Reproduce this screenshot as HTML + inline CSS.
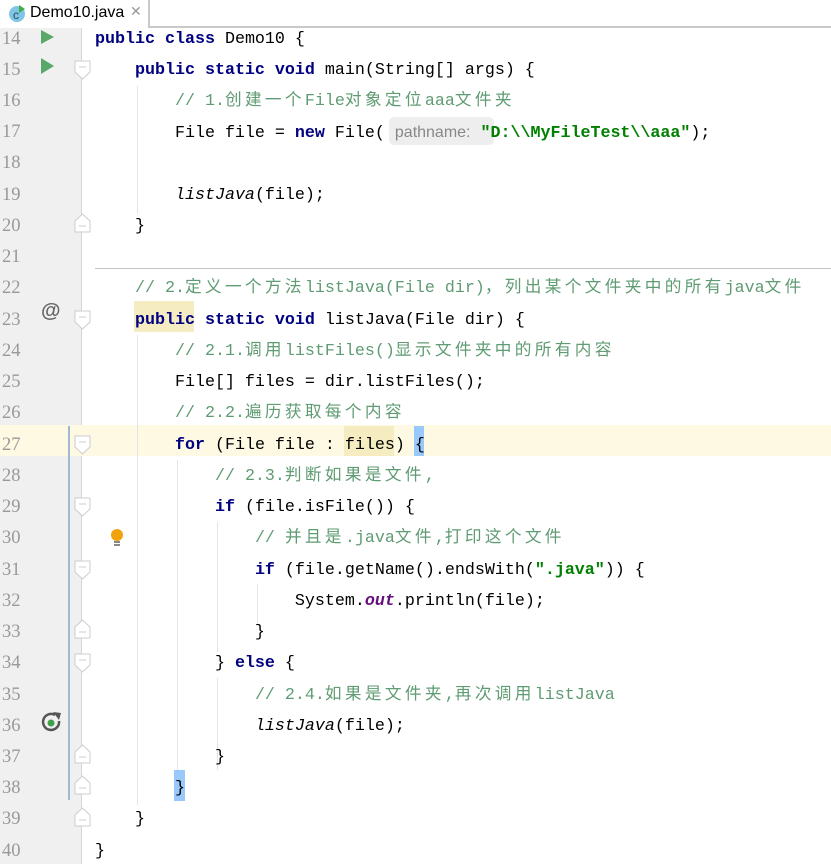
<!DOCTYPE html>
<html><head><meta charset="utf-8"><style>
*{margin:0;padding:0;box-sizing:border-box}
body{width:831px;height:864px;overflow:hidden;background:#fff;position:relative;font-family:"Liberation Mono",monospace;font-size:16.67px}
.tabbar{position:absolute;left:0;top:0;width:831px;height:28px;background:#fff;border-bottom:2px solid #c9c9c9}
.tab{position:absolute;left:0;top:0;width:150px;height:28px;border-right:2px solid #c9c9c9;background:#fff;font-family:"Liberation Sans",sans-serif;font-size:16px;color:#000}
.gutter{position:absolute;left:0;top:28px;width:82px;height:836px;background:#f0f0f0;border-right:1px solid #d6d6d6}
.ln{position:absolute;left:0;width:30px;text-align:left;padding-left:2px;color:#999;font-size:18.5px;font-family:"Liberation Serif",serif;height:31px;line-height:31px}
.line{position:absolute;left:95px;height:31px;line-height:31px;white-space:pre;color:#000}
.k{color:#000080;font-weight:bold}
.cm{color:#5f9b73}
.s{color:#008000;font-weight:bold}
.it{font-style:italic}
.o{color:#660e7a;font-weight:bold;font-style:italic}
.c{font-family:"Noto Sans CJK SC",sans-serif;letter-spacing:3.33px;font-size:16.67px;line-height:0}
.guide{position:absolute;width:1px;background:#e4e4e4}
</style></head><body>
<div class="tabbar"><div class="tab">
<svg style="position:absolute;left:8px;top:5px" width="18" height="18"><circle cx="9" cy="9" r="8" fill="#7fc5e6"/><text x="5" y="14" font-size="12" font-family="Liberation Sans" fill="#2a4a5a">c</text><polygon points="11,0 17,4 11,8" fill="#3fae4a"/></svg>
<span style="position:absolute;left:30px;top:4px">Demo10.java</span>
<span style="position:absolute;left:130px;top:3px;color:#999;font-size:14px">✕</span></div></div>
<div class="gutter"></div>
<div style="position:absolute;left:0;top:425px;width:831px;height:31px;background:#fdf9e3"></div>
<div style="position:absolute;left:0;top:425px;width:82px;height:31px;background:#fdf9e3"></div>
<div style="position:absolute;left:68px;top:426px;width:2px;height:374px;background:#a5b8d2"></div>
<div style="position:absolute;left:95px;top:268px;width:736px;height:1px;background:#c4c4c4"></div>
<div class="guide" style="left:137px;top:86px;height:128px"></div>
<div class="guide" style="left:137px;top:335px;height:470px"></div>
<div class="guide" style="left:177px;top:460px;height:318px"></div>
<div class="guide" style="left:217px;top:522px;height:130px"></div>
<div class="guide" style="left:217px;top:678px;height:92px"></div>
<div class="guide" style="left:257px;top:584px;height:40px"></div>
<div style="position:absolute;left:134px;top:301px;width:60px;height:31px;background:#f5ecc2"></div>
<div style="position:absolute;left:344px;top:426px;width:50px;height:30px;background:#f5ecc2"></div>
<div style="position:absolute;left:414px;top:426px;width:10px;height:30px;background:#99c8fa"></div>
<div style="position:absolute;left:174px;top:770px;width:11px;height:31px;background:#99c8fa"></div>
<div style="position:absolute;left:389px;top:117px;width:105px;height:28px;background:#eeeeee;border-radius:5px"></div>
<div class="ln" style="top:24px">14</div><div class="ln" style="top:55px">15</div><div class="ln" style="top:86px">16</div><div class="ln" style="top:117px">17</div><div class="ln" style="top:148px">18</div><div class="ln" style="top:180px">19</div><div class="ln" style="top:211px">20</div><div class="ln" style="top:242px">21</div><div class="ln" style="top:273px">22</div><div class="ln" style="top:305px">23</div><div class="ln" style="top:336px">24</div><div class="ln" style="top:367px">25</div><div class="ln" style="top:398px">26</div><div class="ln" style="top:430px">27</div><div class="ln" style="top:461px">28</div><div class="ln" style="top:492px">29</div><div class="ln" style="top:523px">30</div><div class="ln" style="top:555px">31</div><div class="ln" style="top:586px">32</div><div class="ln" style="top:617px">33</div><div class="ln" style="top:648px">34</div><div class="ln" style="top:680px">35</div><div class="ln" style="top:711px">36</div><div class="ln" style="top:742px">37</div><div class="ln" style="top:773px">38</div><div class="ln" style="top:804px">39</div><div class="ln" style="top:836px">40</div>
<svg style="position:absolute;left:41px;top:30px" width="14" height="16"><polygon points="0,0 13,7 0,14" fill="#59a869"/></svg>
<svg style="position:absolute;left:41px;top:58px" width="14" height="18"><polygon points="0,0 13,8 0,16" fill="#59a869"/></svg>
<div style="position:absolute;left:41px;top:300px;font-family:'Liberation Sans',sans-serif;font-size:20px;font-weight:bold;color:#666">@</div>
<svg style="position:absolute;left:108px;top:528px" width="18" height="20"><circle cx="9" cy="7" r="6" fill="#f0a30a"/><rect x="6" y="13" width="6" height="2" fill="#888"/><rect x="6" y="16" width="6" height="2" fill="#888"/></svg>
<svg style="position:absolute;left:41px;top:712px" width="22" height="22"><path d="M14 3 A8 8 0 1 0 18 9" fill="none" stroke="#555" stroke-width="2.5"/><polygon points="12,0 20,1 18,8" fill="#555"/><circle cx="10" cy="11" r="3.5" fill="#3fa04a"/></svg>
<svg style="position:absolute;left:74px;top:60px" width="18" height="22"><path d="M1 1H16V12L8.5 19L1 12Z" fill="#fff" stroke="#ccc"/><path d="M5 7H12" stroke="#ccc"/></svg>
<svg style="position:absolute;left:74px;top:212px" width="18" height="22"><path d="M1 20H16V9L8.5 2L1 9Z" fill="#fff" stroke="#ccc"/><path d="M5 14H12" stroke="#ccc"/></svg>
<svg style="position:absolute;left:74px;top:310px" width="18" height="22"><path d="M1 1H16V12L8.5 19L1 12Z" fill="#fff" stroke="#ccc"/><path d="M5 7H12" stroke="#ccc"/></svg>
<svg style="position:absolute;left:74px;top:435px" width="18" height="22"><path d="M1 1H16V12L8.5 19L1 12Z" fill="#fff" stroke="#ccc"/><path d="M5 7H12" stroke="#ccc"/></svg>
<svg style="position:absolute;left:74px;top:497px" width="18" height="22"><path d="M1 1H16V12L8.5 19L1 12Z" fill="#fff" stroke="#ccc"/><path d="M5 7H12" stroke="#ccc"/></svg>
<svg style="position:absolute;left:74px;top:560px" width="18" height="22"><path d="M1 1H16V12L8.5 19L1 12Z" fill="#fff" stroke="#ccc"/><path d="M5 7H12" stroke="#ccc"/></svg>
<svg style="position:absolute;left:74px;top:618px" width="18" height="22"><path d="M1 20H16V9L8.5 2L1 9Z" fill="#fff" stroke="#ccc"/><path d="M5 14H12" stroke="#ccc"/></svg>
<svg style="position:absolute;left:74px;top:653px" width="18" height="22"><path d="M1 1H16V12L8.5 19L1 12Z" fill="#fff" stroke="#ccc"/><path d="M5 7H12" stroke="#ccc"/></svg>
<svg style="position:absolute;left:74px;top:743px" width="18" height="22"><path d="M1 20H16V9L8.5 2L1 9Z" fill="#fff" stroke="#ccc"/><path d="M5 14H12" stroke="#ccc"/></svg>
<svg style="position:absolute;left:74px;top:774px" width="18" height="22"><path d="M1 20H16V9L8.5 2L1 9Z" fill="#fff" stroke="#ccc"/><path d="M5 14H12" stroke="#ccc"/></svg>
<svg style="position:absolute;left:74px;top:806px" width="18" height="22"><path d="M1 20H16V9L8.5 2L1 9Z" fill="#fff" stroke="#ccc"/><path d="M5 14H12" stroke="#ccc"/></svg>
<div class="line" style="top:24px"><span class="k">public class</span> Demo10 {</div>
<div class="line" style="top:55px">    <span class="k">public static void</span> main(String[] args) {</div>
<div class="line" style="top:86px">        <span class="cm">// 1.<span class="c">创建一个</span>File<span class="c">对象定位</span>aaa<span class="c">文件夹</span></span></div>
<div class="line" style="top:117px">        File file = <span class="k">new</span> File( <span style="font-family:'Liberation Sans',sans-serif;color:#888;font-size:16px">pathname:</span> <span class="s">"D:\\MyFileTest\\aaa"</span>);</div>
<div class="line" style="top:180px">        <span class="it">listJava</span>(file);</div>
<div class="line" style="top:211px">    }</div>
<div class="line" style="top:273px">    <span class="cm">// 2.<span class="c">定义一个方法</span>listJava(File dir)<span class="c">，列出某个文件夹中的所有</span>java<span class="c">文件</span></span></div>
<div class="line" style="top:305px">    <span class="k">public static void</span> listJava(File dir) {</div>
<div class="line" style="top:336px">        <span class="cm">// 2.1.<span class="c">调用</span>listFiles()<span class="c">显示文件夹中的所有内容</span></span></div>
<div class="line" style="top:367px">        File[] files = dir.listFiles();</div>
<div class="line" style="top:398px">        <span class="cm">// 2.2.<span class="c">遍历获取每个内容</span></span></div>
<div class="line" style="top:430px">        <span class="k">for</span> (File file : files) {</div>
<div class="line" style="top:461px">            <span class="cm">// 2.3.<span class="c">判断如果是文件</span>,</span></div>
<div class="line" style="top:492px">            <span class="k">if</span> (file.isFile()) {</div>
<div class="line" style="top:523px">                <span class="cm">// <span class="c">并且是</span>.java<span class="c">文件</span>,<span class="c">打印这个文件</span></span></div>
<div class="line" style="top:555px">                <span class="k">if</span> (file.getName().endsWith(<span class="s">".java"</span>)) {</div>
<div class="line" style="top:586px">                    System.<span class="o">out</span>.println(file);</div>
<div class="line" style="top:617px">                }</div>
<div class="line" style="top:648px">            } <span class="k">else</span> {</div>
<div class="line" style="top:680px">                <span class="cm">// 2.4.<span class="c">如果是文件夹</span>,<span class="c">再次调用</span>listJava</span></div>
<div class="line" style="top:711px">                <span class="it">listJava</span>(file);</div>
<div class="line" style="top:742px">            }</div>
<div class="line" style="top:773px">        }</div>
<div class="line" style="top:804px">    }</div>
<div class="line" style="top:836px">}</div>
</body></html>
